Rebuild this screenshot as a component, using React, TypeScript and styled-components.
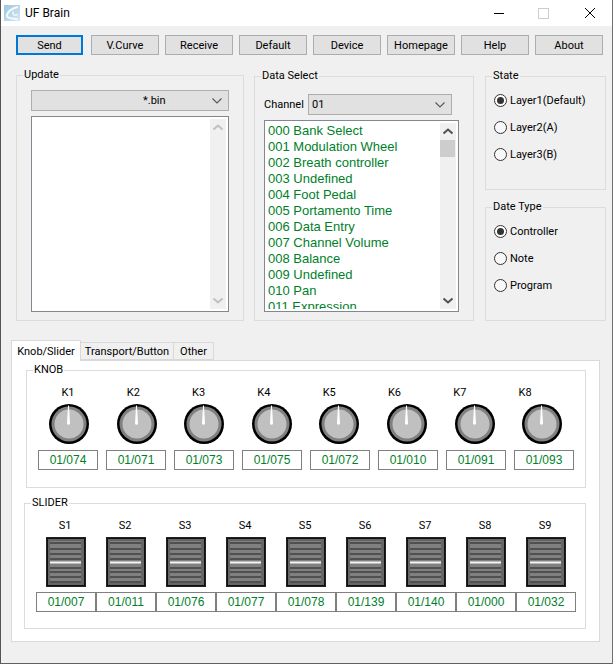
import React from "react";
import styled, { createGlobalStyle } from "styled-components";

const Global = createGlobalStyle`
  html, body { margin: 0; padding: 0; background: #f0f0f0; }
  * { box-sizing: border-box; }
`;

const Win = styled.div`
  width: 613px;
  height: 664px;
  background: #f0f0f0;
  border-left: 1px solid #555;
  border-right: 1px solid #707070;
  border-bottom: 1px solid #606060;
  font-family: Roboto, sans-serif;
  font-size: 11px;
  color: #000;
  overflow: hidden;
`;

const TitleBar = styled.div`
  height: 26px;
  background: #fff;
  display: flex;
  align-items: center;
`;

const AppIcon = styled.svg`
  width: 16px;
  height: 16px;
  margin-left: 3px;
`;

const Title = styled.span`
  margin-left: 5px;
  flex: 1;
  font-size: 12px;
`;

const WinCtl = styled.svg`
  width: 46px;
  height: 26px;
  flex: none;
`;

const Body = styled.div`
  padding: 9px 0 0 15px;
`;

const Toolbar = styled.div`
  display: flex;
  gap: 6px;
`;

const Btn = styled.button<{ $focus?: boolean }>`
  width: ${(p) => (p.$focus ? 67 : 68)}px;
  margin-right: ${(p) => (p.$focus ? 2 : 0)}px;
  height: 20px;
  padding: 0;
  background: #e1e1e1;
  border: ${(p) => (p.$focus ? "2px solid #0078d7" : "1px solid #adadad")};
  font: inherit;
  line-height: 1;
  color: #000;
`;

const Upper = styled.div`
  display: flex;
  margin-top: 12px;
`;

const Group = styled.fieldset<{ $w: number; $h: number; $ml?: number; $mt?: number }>`
  width: ${(p) => p.$w}px;
  height: ${(p) => p.$h}px;
  margin: ${(p) => p.$mt ?? 0}px 0 0 ${(p) => p.$ml ?? 0}px;
  padding: 0;
  border: 1px solid #dcdcdc;
  min-width: 0;
`;

const Legend = styled.legend`
  margin-left: 6px;
  padding: 0 1px;
  line-height: 16px;
  height: 16px;
`;

const UpdateBody = styled.div`
  padding: 7px 0 0 14px;
`;

const Combo = styled.div<{ $w: number; $h: number; $pl: number }>`
  width: ${(p) => p.$w}px;
  height: ${(p) => p.$h}px;
  padding-left: ${(p) => p.$pl}px;
  background: #e1e1e1;
  border: 1px solid #adadad;
  display: flex;
  align-items: center;
  justify-content: space-between;
`;

const ComboArrow = styled.svg`
  width: 10px;
  height: 6px;
  margin-right: 6px;
`;

const ListBox = styled.div<{ $w: number; $h: number; $mt: number }>`
  width: ${(p) => p.$w}px;
  height: ${(p) => p.$h}px;
  margin-top: ${(p) => p.$mt}px;
  background: #fff;
  border: 1px solid #828790;
  display: flex;
  padding: 2px 2px 2px 3px;
`;

const ListItems = styled.div`
  flex: 1;
  overflow: hidden;
  font-family: "Liberation Sans", sans-serif;
  font-size: 13px;
  line-height: 16px;
  color: #007f2a;
`;

const ListRow = styled.div`
  white-space: nowrap;
`;

const ScrollTrack = styled.div`
  width: 16px;
  background: #f0f0f0;
  display: flex;
  flex-direction: column;
  justify-content: space-between;
  position: relative;
`;

const ScrollBtn = styled.svg`
  width: 16px;
  height: 17px;
  flex: none;
`;

const Thumb = styled.div`
  position: absolute;
  top: 17px;
  left: 0;
  width: 15px;
  height: 17px;
  background: #cdcdcd;
`;

const ChannelRow = styled.div`
  display: flex;
  align-items: center;
  padding: 10px 0 0 9px;
`;

const ChannelLabel = styled.span`
  width: 44px;
  flex: none;
`;

const ListWrap = styled.div`
  padding-left: 9px;
`;

const SideCol = styled.div`
  margin-left: 11px;
`;

const RadioList = styled.div`
  display: flex;
  flex-direction: column;
  gap: 14px;
  padding: 10px 0 0 8px;
`;

const RadioRow = styled.label`
  display: flex;
  align-items: center;
  height: 13px;
  gap: 3px;
`;

const RadioDot = styled.span<{ $on?: boolean }>`
  width: 13px;
  height: 13px;
  border-radius: 50%;
  border: 1px solid #333;
  background: ${(p) => (p.$on ? "#fff" : "#f8f8f8")};
  display: flex;
  align-items: center;
  justify-content: center;
  &::after {
    content: "";
    display: ${(p) => (p.$on ? "block" : "none")};
    width: 7px;
    height: 7px;
    border-radius: 50%;
    background: #333;
  }
`;

const Tabs = styled.div`
  display: flex;
  align-items: flex-end;
  margin: 17px 0 0 -5px;
  height: 22px;
`;

const Tab = styled.div<{ $on?: boolean; $w: number }>`
  width: ${(p) => p.$w}px;
  height: ${(p) => (p.$on ? 21 : 18)}px;
  margin-bottom: ${(p) => (p.$on ? -1 : 0)}px;
  background: ${(p) => (p.$on ? "#fff" : "#f0f0f0")};
  border: 1px solid #d9d9d9;
  border-bottom: ${(p) => (p.$on ? "none" : "1px solid #d9d9d9")};
  border-left: ${(p) => (p.$on ? "1px solid #d9d9d9" : "none")};
  display: flex;
  align-items: center;
  justify-content: center;
  position: relative;
`;

const TabPanel = styled.div`
  width: 589px;
  height: 282px;
  margin-left: -5px;
  background: #fff;
  border: 1px solid #d9d9d9;
  padding-top: 1px;
`;

const WhiteGroup = styled.fieldset<{ $ml: number; $w: number; $h: number; $mt: number }>`
  margin: ${(p) => p.$mt}px 0 0 ${(p) => p.$ml}px;
  width: ${(p) => p.$w}px;
  height: ${(p) => p.$h}px;
  padding: 0;
  min-width: 0;
  border: 1px solid #dcdcdc;
`;

const Row = styled.div<{ $gap: number; $pl: number; $mt: number }>`
  display: flex;
  gap: ${(p) => p.$gap}px;
  padding-left: ${(p) => p.$pl}px;
  margin-top: ${(p) => p.$mt}px;
`;

const CtlName = styled.span<{ $w: number }>`
  width: ${(p) => p.$w}px;
  text-align: center;
  line-height: 16px;
  height: 16px;
  flex: none;
`;

const Knob = styled.svg`
  width: 40px;
  height: 40px;
  flex: none;
`;

const Fader = styled.svg`
  width: 40px;
  height: 50px;
  flex: none;
`;

const Value = styled.div`
  width: 60px;
  height: 20px;
  flex: none;
  border: 1px solid #808080;
  color: #007f2a;
  display: flex;
  align-items: center;
  justify-content: center;
  font-family: "Liberation Sans", sans-serif;
  font-size: 12px;
`;

const listItems = [
  "000 Bank Select",
  "001 Modulation Wheel",
  "002 Breath controller",
  "003 Undefined",
  "004 Foot Pedal",
  "005 Portamento Time",
  "006 Data Entry",
  "007 Channel Volume",
  "008 Balance",
  "009 Undefined",
  "010 Pan",
  "011 Expression",
];

const Chevron = ({ up, color }: { up?: boolean; color: string }) => (
  <ScrollBtn viewBox="0 0 16 17">
    <path d={up ? "M3.5 10.5 L8 6.5 L12.5 10.5" : "M3.5 6.5 L8 10.5 L12.5 6.5"} fill="none" stroke={color} strokeWidth="2" />
  </ScrollBtn>
);

const Arrow = () => (
  <ComboArrow viewBox="0 0 10 6">
    <path d="M0.5 0.5 L5 5 L9.5 0.5" fill="none" stroke="#555" strokeWidth="1.1" />
  </ComboArrow>
);

const KnobArt = () => (
  <Knob viewBox="0 0 40 40">
    <circle cx="20" cy="20" r="20" fill="#000" />
    <circle cx="20" cy="20" r="17.5" fill="#808080" />
    <circle cx="20" cy="20" r="14.5" fill="#c0c0c0" />
    <path d="M19 1.5 L20 1.5 L21 20 Q19.5 21.5 18 20 Z" fill="#fff" />
  </Knob>
);

const FaderArt = () => (
  <Fader viewBox="0 0 40 50">
    <rect x="0" y="0" width="40" height="50" fill="#222" />
    <rect x="1" y="1" width="38" height="48" fill="#111" />
    <rect x="2" y="2" width="36" height="46" fill="#666" />
    <rect x="4" y="4" width="31" height="42" fill="#808080" />
    {[5, 11, 16, 21, 30, 34, 39, 44].map((y) => (
      <rect key={y} x="4" y={y} width="31" height="2" fill="#505050" />
    ))}
    <rect x="4" y="24.5" width="31" height="2" fill="#f4f4f4" />
  </Fader>
);

const knobVals = ["074", "071", "073", "075", "072", "010", "091", "093"];
const sliderVals = ["007", "011", "076", "077", "078", "139", "140", "000", "032"];

export default function App() {
  const buttons = ["V.Curve", "Receive", "Default", "Device", "Homepage", "Help", "About"];
  return (
    <>
      <Global />
      <Win>
        <TitleBar>
          <AppIcon viewBox="0 0 16 16">
            <defs>
              <linearGradient id="appBg" x1="0" y1="0" x2="1" y2="1">
                <stop offset="0" stopColor="#9cc8e2" />
                <stop offset="1" stopColor="#d4e6f1" />
              </linearGradient>
            </defs>
            <rect width="16" height="16" fill="url(#appBg)" />
            <path d="M14 2 C8 3 3 7 3 11 C3 13.5 8 13 14 14.5" fill="none" stroke="#f4f9fc" strokeWidth="2" />
            <path d="M9.5 6.5 C8 9.5 10 11 13.5 9.5" fill="none" stroke="#f4f9fc" strokeWidth="1.4" />
          </AppIcon>
          <Title>UF Brain</Title>
          <WinCtl viewBox="0 0 46 26">
            <rect x="20" y="13" width="10" height="1" fill="#000" />
          </WinCtl>
          <WinCtl viewBox="0 0 46 26">
            <rect x="18.5" y="8.5" width="10" height="10" fill="none" stroke="#ccc" />
          </WinCtl>
          <WinCtl viewBox="0 0 46 26">
            <path d="M19 8 L29 18 M29 8 L19 18" stroke="#000" strokeWidth="1" fill="none" />
          </WinCtl>
        </TitleBar>
        <Body>
          <Toolbar>
            <Btn $focus>Send</Btn>
            {buttons.map((b) => (
              <Btn key={b}>{b}</Btn>
            ))}
          </Toolbar>
          <Upper>
            <Group $w={228} $h={254}>
              <Legend>Update</Legend>
              <UpdateBody>
                <Combo $w={198} $h={21} $pl={111}>
                  *.bin
                  <Arrow />
                </Combo>
                <ListBox $w={198} $h={196} $mt={5}>
                  <ListItems />
                  <ScrollTrack>
                    <Chevron up color="#c0c0c0" />
                    <Chevron color="#c0c0c0" />
                  </ScrollTrack>
                </ListBox>
              </UpdateBody>
            </Group>
            <Group $w={220} $h={253} $ml={10} $mt={1}>
              <Legend>Data Select</Legend>
              <ChannelRow>
                <ChannelLabel>Channel</ChannelLabel>
                <Combo $w={144} $h={21} $pl={3}>
                  01
                  <Arrow />
                </Combo>
              </ChannelRow>
              <ListWrap>
                <ListBox $w={195} $h={192} $mt={5}>
                  <ListItems>
                    {listItems.map((t) => (
                      <ListRow key={t}>{t}</ListRow>
                    ))}
                  </ListItems>
                  <ScrollTrack>
                    <Chevron up color="#505050" />
                    <Thumb />
                    <Chevron color="#505050" />
                  </ScrollTrack>
                </ListBox>
              </ListWrap>
            </Group>
            <SideCol>
              <Group $w={121} $h={122} $mt={1}>
                <Legend>State</Legend>
                <RadioList>
                  <RadioRow><RadioDot $on />Layer1(Default)</RadioRow>
                  <RadioRow><RadioDot />Layer2(A)</RadioRow>
                  <RadioRow><RadioDot />Layer3(B)</RadioRow>
                </RadioList>
              </Group>
              <Group $w={121} $h={122} $mt={9}>
                <Legend>Date Type</Legend>
                <RadioList>
                  <RadioRow><RadioDot $on />Controller</RadioRow>
                  <RadioRow><RadioDot />Note</RadioRow>
                  <RadioRow><RadioDot />Program</RadioRow>
                </RadioList>
              </Group>
            </SideCol>
          </Upper>
          <Tabs>
            <Tab $on $w={70}>Knob/Slider</Tab>
            <Tab $w={93}>Transport/Button</Tab>
            <Tab $w={40}>Other</Tab>
          </Tabs>
          <TabPanel>
            <WhiteGroup $ml={14} $w={560} $h={126} $mt={0}>
              <Legend>KNOB</Legend>
              <Row $gap={49.3} $pl={33} $mt={7}>
                {knobVals.map((_, i) => (
                  <CtlName key={i} $w={16}>K{i + 1}</CtlName>
                ))}
              </Row>
              <Row $gap={27.6} $pl={22} $mt={3}>
                {knobVals.map((_, i) => (
                  <KnobArt key={i} />
                ))}
              </Row>
              <Row $gap={8} $pl={11} $mt={6}>
                {knobVals.map((v) => (
                  <Value key={v}>01/{v}</Value>
                ))}
              </Row>
            </WhiteGroup>
            <WhiteGroup $ml={12} $w={562} $h={134} $mt={7}>
              <Legend>SLIDER</Legend>
              <Row $gap={44} $pl={32} $mt={7}>
                {sliderVals.map((_, i) => (
                  <CtlName key={i} $w={16}>S{i + 1}</CtlName>
                ))}
              </Row>
              <Row $gap={20} $pl={21} $mt={3}>
                {sliderVals.map((_, i) => (
                  <FaderArt key={i} />
                ))}
              </Row>
              <Row $gap={0} $pl={11} $mt={5}>
                {sliderVals.map((v) => (
                  <Value key={v}>01/{v}</Value>
                ))}
              </Row>
            </WhiteGroup>
          </TabPanel>
        </Body>
      </Win>
    </>
  );
}
